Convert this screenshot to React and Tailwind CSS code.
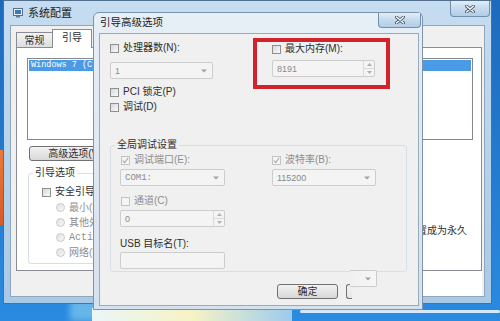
import React from 'react';

const font = "font-['Liberation_Sans','Noto_Sans_CJK_SC',sans-serif]";
const mono = "font-['Liberation_Mono','Noto_Sans_CJK_SC',monospace]";

function Check({ label, checked, disabled, className = '' }) {
    return (
        <div className={`flex items-center h-[14px] gap-[4px] ${className}`}>
            <span
                className={`w-[9px] h-[9px] border flex items-center justify-center ${disabled
                    ? 'border-[#c4c4c4] bg-[#f5f5f5]'
                    : 'border-[#8e8f8f] bg-gradient-to-br from-[#d8d8d8] to-[#fafafa]'
                    }`}
            >
                {checked && (
                    <svg width="7" height="7" viewBox="0 0 7 7">
                        <path d="M0.8 3.6 L2.7 5.6 L6.2 0.8" stroke="#a8a8a8" strokeWidth="1.1" fill="none" />
                    </svg>
                )}
            </span>
            <span className={`text-[10px] leading-[14px] whitespace-nowrap ${disabled ? 'text-[#8e8e8e]' : 'text-[#2e2e2e]'}`}>
                {label}
            </span>
        </div>
    );
}

function Radio({ label, isMono }) {
    return (
        <div className="flex items-center h-[15px] gap-[4px]">
            <span className="w-[9px] h-[9px] rounded-full border border-[#c8c8c8] bg-gradient-to-br from-[#e2e2e2] to-[#f7f7f7]" />
            <span className={`text-[10px] leading-[14px] text-[#8e8e8e] whitespace-nowrap ${isMono ? mono : ''}`}>{label}</span>
        </div>
    );
}

function Arrow() {
    return (
        <svg width="6" height="4" viewBox="0 0 6 4">
            <path d="M0 0.5 L6 0.5 L3 3.5 Z" fill="#a0a0a0" />
        </svg>
    );
}

function Combo({ value, className = '', isMono }) {
    return (
        <div className={`h-[17px] border border-[#cdcdcd] rounded-[2px] bg-[#f4f4f4] flex items-center pl-[4px] pr-[5px] ${className}`}>
            <span className={`flex-1 text-[9px] leading-[12px] text-[#8a8a8a] ${isMono ? mono : ''}`}>{value}</span>
            <Arrow />
        </div>
    );
}

function Spin({ value, className = '' }) {
    return (
        <div className={`h-[17px] border border-[#cdcdcd] rounded-[2px] bg-[#f4f4f4] flex items-center ${className}`}>
            <span className="flex-1 pl-[4px] text-[9px] leading-[12px] text-[#8a8a8a]">{value}</span>
            <div className="w-[11px] h-full flex flex-col border-l border-[#dadada]">
                <div className="flex-1 flex items-center justify-center border-b border-[#dadada]">
                    <svg width="5" height="3" viewBox="0 0 5 3"><path d="M0 3 L5 3 L2.5 0 Z" fill="#b0b0b0" /></svg>
                </div>
                <div className="flex-1 flex items-center justify-center">
                    <svg width="5" height="3" viewBox="0 0 5 3"><path d="M0 0 L5 0 L2.5 3 Z" fill="#b0b0b0" /></svg>
                </div>
            </div>
        </div>
    );
}

function CloseBtn({ className = '' }) {
    return (
        <div className={`absolute flex items-center justify-center rounded-b-[4px] border border-t-0 border-[#6f8fae] bg-gradient-to-b from-[#e3eef8] via-[#c4daee] to-[#b3cde6] ${className}`}>
            <svg width="10" height="8" viewBox="0 0 10 8">
                <path d="M1.5 1 L8.5 7 M8.5 1 L1.5 7" stroke="#44576b" strokeWidth="3" strokeLinecap="round" />
                <path d="M1.5 1 L8.5 7 M8.5 1 L1.5 7" stroke="#ffffff" strokeWidth="1.4" strokeLinecap="round" />
            </svg>
        </div>
    );
}

function BackWindow() {
    return (
        <div className="absolute left-[3px] top-0 w-[489px] h-[304px] border border-[#52708e] bg-gradient-to-b from-[#c6dcf0] to-[#a8c9e6] flex flex-col">
            {/* title */}
            <div className="h-[24px] flex items-center pl-[9px] gap-[5px]">
                <svg width="10" height="10" viewBox="0 0 10 10">
                    <rect x="0.5" y="0.5" width="9" height="7" fill="#e8eef4" stroke="#5b6f86" />
                    <rect x="2" y="2" width="6" height="4" fill="#3b78c4" />
                    <rect x="3" y="8" width="4" height="1.5" fill="#6b7b8c" />
                </svg>
                <span className="text-[11px] text-[#1c1c1c]">系统配置</span>
            </div>
            <CloseBtn className="right-[1px] top-0 w-[40px] h-[16px]" />

            {/* content */}
            <div className="mx-[6px] mb-[6px] flex-1 bg-[#f0f0f0] border border-[#8fa6bc] flex flex-col">
                <div className="flex items-end pl-[5px] pt-[3px]">
                    <div className="w-[37px] h-[16px] border border-[#898c95] border-b-0 bg-gradient-to-b from-[#f3f3f3] to-[#dcdcdc] flex items-center justify-center text-[10px] text-[#2e2e2e]">
                        常规
                    </div>
                    <div className="relative z-10 w-[40px] h-[19px] -ml-[1px] border border-[#898c95] border-b-0 bg-white pl-[9px] text-[10px] leading-[16px] text-[#2e2e2e]">
                        引导
                    </div>
                </div>
                <div className="ml-[5px] -mt-[1px] w-[466px] h-[224px] bg-white border border-[#898c95] flex flex-col">
                    <div className="ml-[10px] mt-[10px] w-[446px] h-[82px] border border-[#828790] p-[1px]">
                        <div className={`h-[11px] bg-[#4a9ae6] text-white text-[8.5px] leading-[11px] pl-[2px] whitespace-nowrap ${mono}`}>
                            Windows 7 (C:\Windows) : 当前操作系统; 默认操作系统
                        </div>
                    </div>
                    <div className="ml-[12px] mt-[6px] w-[100px] h-[15px] border border-[#707070] rounded-[3px] bg-gradient-to-b from-[#f2f2f2] to-[#d8d8d8] flex items-center justify-center text-[10px] text-[#2e2e2e] whitespace-nowrap">
                        高级选项(V)...
                    </div>
                    <div className="flex">
                        <fieldset className="ml-[11px] mt-[5px] w-[230px] h-[98px] border border-[#d5dfe5] rounded-[3px] px-[4px]">
                            <legend className="px-[2px] text-[10px] leading-[14px] text-[#2e2e2e]">引导选项</legend>
                            <div className="pl-[9px] pt-[5px]">
                                <Check label="安全引导(F)" />
                                <div className="pl-[14px] mt-[1px]">
                                    <Radio label="最小(M)" />
                                    <Radio label="其他外壳(L)" />
                                    <Radio label="Active Directory 修复(P)" isMono />
                                    <Radio label="网络(N)" />
                                </div>
                            </div>
                        </fieldset>
                        <div className="ml-auto mr-[14px] mt-[63px] text-[10px] leading-[14px] text-[#2e2e2e] whitespace-nowrap">
                            使所有引导设置成为永久
                        </div>
                    </div>
                </div>
                <div className="flex-1 flex justify-end pr-[2px]">
                    <div className="w-[62px] bg-white" />
                </div>
            </div>
        </div>
    );
}

function FrontWindow() {
    return (
        <div className="absolute left-[93px] top-[12px] w-[330px] h-[298px] rounded-t-[6px] border border-[#7d93a9] bg-gradient-to-b from-[#e6eef6] to-[#d4e2ef] flex flex-col">
            <div className="h-[20px] flex items-center pl-[6px]">
                <span className="text-[10.5px] text-[#1c1c1c]">引导高级选项</span>
            </div>
            <CloseBtn className="right-[1px] top-0 w-[43px] h-[15px]" />

            <div className="relative ml-[5px] mr-[3px] mb-[3px] flex-1 bg-[#f0f0f0] border border-[#98aabb] flex flex-col">
                {/* top section */}
                <div className="flex items-start pl-[10px] pt-[4px]">
                    <div className="w-[143px] mt-[3px] flex flex-col">
                        <Check label="处理器数(N):" />
                        <Combo value="1" className="w-[103px] mt-[7px]" />
                        <Check label="PCI 锁定(P)" className="mt-[6px]" />
                        <Check label="调试(D)" className="mt-[1px]" />
                    </div>
                    <div className="w-[137px] h-[51px] border-[4px] border-[#d0232b] pl-[15px] flex flex-col">
                        <Check label="最大内存(M):" />
                        <Spin value="8191" className="w-[103px] mt-[4px]" />
                    </div>
                </div>

                {/* global debug settings */}
                <fieldset className="ml-[10px] mt-[24px] w-[297px] h-[134px] border border-[#d5dfe5] rounded-[3px] px-[4px]">
                    <legend className="px-[2px] text-[10px] leading-[14px] text-[#2e2e2e]">全局调试设置</legend>
                    <div className="pl-[5px] pt-[1px] flex">
                        <div className="w-[152px] flex flex-col">
                            <Check label="调试端口(E):" checked disabled className="ml-[1px]" />
                            <Combo value="COM1:" isMono className="w-[105px] mt-[2px]" />
                            <Check label="通道(C)" disabled className="ml-[1px] mt-[8px]" />
                            <Spin value="0" className="w-[105px] mt-[2px]" />
                            <div className="mt-[10px] h-[14px] text-[10px] leading-[14px] text-[#2e2e2e] whitespace-nowrap">
                                USB 目标名(T):
                            </div>
                            <div className="w-[105px] h-[17px] mt-[1px] border border-[#cdcdcd] rounded-[2px] bg-[#f4f4f4]" />
                        </div>
                        <div className="flex flex-col">
                            <Check label="波特率(B):" checked disabled />
                            <Combo value="115200" className="w-[104px] mt-[2px]" />
                        </div>
                    </div>
                </fieldset>

                {/* torn-off combo fragment */}
                <div className="absolute left-[250px] top-[236px] w-[27px] h-[17px] border border-l-0 border-[#cdcdcd] rounded-r-[2px] bg-gradient-to-r from-[#f0f0f0] to-[#f6f6f6] flex items-center justify-end pr-[5px]">
                    <Arrow />
                </div>

                {/* buttons */}
                <div className="flex pl-[177px] mt-[12px] gap-[8px]">
                    <div className="w-[61px] h-[15px] border border-[#707070] rounded-[3px] bg-gradient-to-b from-[#f2f2f2] to-[#d8d8d8] flex items-center justify-center text-[10px] leading-[12px] text-[#2e2e2e]">
                        确定
                    </div>
                    <div className="w-[6px] h-[15px] border border-r-0 border-[#707070] rounded-l-[3px] bg-gradient-to-b from-[#f2f2f2] to-[#e6e6e6]" />
                </div>
            </div>
        </div>
    );
}

export default function App() {
    return (
        <div className={`relative w-[500px] h-[321px] overflow-hidden bg-gradient-to-b from-[#1d6abd] to-[#2a8be0] ${font}`}>
            {/* wallpaper bits */}
            <div className="absolute left-0 top-[150px] w-[4px] h-[75px] bg-gradient-to-b from-[#e9793a] to-[#d85a2a]" />
            <div className="absolute left-[70px] top-[300px] w-[30px] h-[21px] bg-[#8fd3f2]/60 blur-[3px]" />
            <div className="absolute left-[92px] top-[308px] w-[200px] h-[13px] bg-gradient-to-r from-[#eaf6f8] via-[#f6f3c4] to-[#9ccbec]" />
            <div className="absolute left-[300px] top-[310px] w-[200px] h-[3px] bg-white/80 rounded-full" />

            <BackWindow />
            <FrontWindow />
        </div>
    );
}
